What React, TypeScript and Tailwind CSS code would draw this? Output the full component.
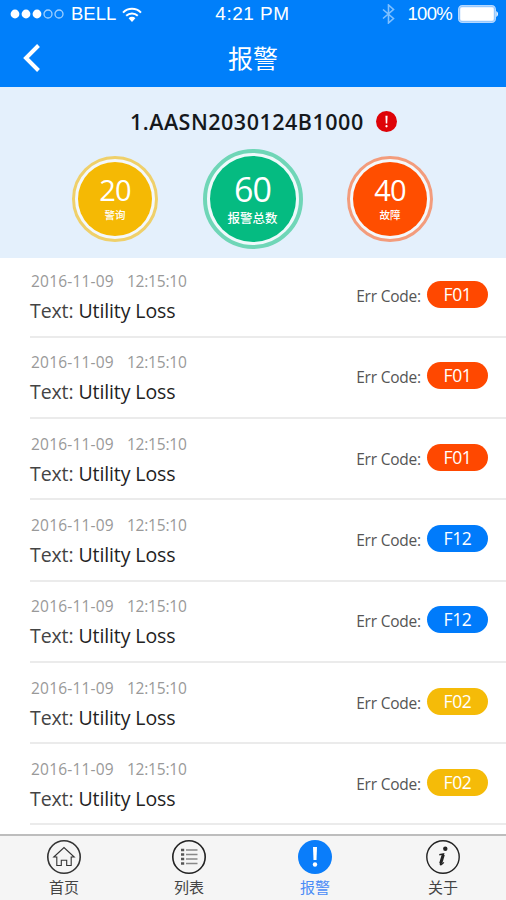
import React from 'react';

interface IAlarm {
  id: number;
  date: string;
  time: string;
  text: string;
  code: string;
  rowClass: string;
}

interface IStat {
  label: string;
  value: number;
  ringClass: string;
  fillClass: string;
  large?: boolean;
}

const stats: IStat[] = [
  { label: '警询', value: 20, ringClass: 'border-[#efd06a]', fillClass: 'bg-[#f5b904]' },
  { label: '报警总数', value: 60, ringClass: 'border-[#6fd6b7]', fillClass: 'bg-[#05bb81]', large: true },
  { label: '故障', value: 40, ringClass: 'border-[#f39c7c]', fillClass: 'bg-[#ff4e00]' },
];

const alarms: IAlarm[] = [
  { id: 1, date: '2016-11-09', time: '12:15:10', text: 'Utility Loss', code: 'F01', rowClass: 'h-[80px] pt-[13px]' },
  { id: 2, date: '2016-11-09', time: '12:15:10', text: 'Utility Loss', code: 'F01', rowClass: 'h-[81px] pt-[14px]' },
  { id: 3, date: '2016-11-09', time: '12:15:10', text: 'Utility Loss', code: 'F01', rowClass: 'h-[81px] pt-[15px]' },
  { id: 4, date: '2016-11-09', time: '12:15:10', text: 'Utility Loss', code: 'F12', rowClass: 'h-[82px] pt-[15px]' },
  { id: 5, date: '2016-11-09', time: '12:15:10', text: 'Utility Loss', code: 'F12', rowClass: 'h-[81px] pt-[14px]' },
  { id: 6, date: '2016-11-09', time: '12:15:10', text: 'Utility Loss', code: 'F02', rowClass: 'h-[81px] pt-[15px]' },
  { id: 7, date: '2016-11-09', time: '12:15:10', text: 'Utility Loss', code: 'F02', rowClass: 'h-[81px] pt-[15px]' },
];

// Helper to pick the badge colour of an error code
const getCodeColorClass = (code: string): string => {
  switch (code) {
    case 'F01': return 'bg-[#ff4800]';
    case 'F12': return 'bg-[#007bfb]';
    default: return 'bg-[#f5bb08]';
  }
};

const StatusBar: React.FC = () => (
  <div className="grid h-7 grid-cols-3 items-center pl-[10px] pr-[8px] font-['Liberation_Sans',sans-serif] text-[18.5px] leading-7 text-white">
    <div className="flex items-center">
      <svg className="h-[10px] w-[55px]" viewBox="0 0 55 10" fill="none">
        <circle cx="5" cy="5" r="4.4" fill="white" />
        <circle cx="16" cy="5" r="4.4" fill="white" />
        <circle cx="27" cy="5" r="4.4" fill="white" />
        <circle cx="38" cy="5" r="4" stroke="#9fd0ff" strokeWidth="1.3" />
        <circle cx="49" cy="5" r="4" stroke="#9fd0ff" strokeWidth="1.3" />
      </svg>
      <span className="ml-[6px]">BELL</span>
      <svg className="ml-[6px] h-[15px] w-[20px]" viewBox="0 0 20 15" fill="none" stroke="white" strokeWidth="2">
        <path d="M1 5.6a12.7 12.7 0 0 1 18 0" />
        <path d="M4.2 8.8a8.2 8.2 0 0 1 11.6 0" />
        <path d="M10 15l-3.4-3.8a4.8 4.8 0 0 1 6.8 0z" fill="white" stroke="none" />
      </svg>
    </div>
    <span className="pr-[3px] text-center text-[19px] tracking-[0.5px]">4:21 PM</span>
    <div className="flex items-center justify-end">
      <svg className="mr-[12px] h-[20px] w-[13px]" viewBox="0 0 13 20" fill="none" stroke="#7fc0ff" strokeWidth="1.6">
        <path d="M1 5.5l10.5 9L6.5 19V1l5 4.5L1 14.5" />
      </svg>
      <span className="tracking-[-0.7px]">100%</span>
      <svg className="ml-[6px] h-[18px] w-[40px]" viewBox="0 0 40 18" fill="none">
        <rect x="0.75" y="0.75" width="36.5" height="16.5" rx="3.5" stroke="#b5d8ff" strokeWidth="1.5" />
        <rect x="1.5" y="1.5" width="35" height="15" rx="3" fill="#d3e7ff" />
        <rect x="2.5" y="2.5" width="33" height="13" rx="2" fill="white" />
        <path d="M38.3 6a3.5 3.5 0 0 1 0 6z" fill="white" />
      </svg>
    </div>
  </div>
);

const StatCircle: React.FC<{ stat: IStat }> = ({ stat }) => {
  if (stat.large) {
    return (
      <div className={`h-[100px] w-[100px] rounded-full border-4 bg-[#eef9fb] p-[3px] ${stat.ringClass}`}>
        <div className={`flex h-full w-full flex-col items-center rounded-full pt-[14px] text-white ${stat.fillClass}`}>
          <span className="text-[34px] leading-[38px] tracking-[-1px]">{stat.value}</span>
          <span className="mt-[3px] font-['Liberation_Sans','Noto_Sans_CJK_SC',sans-serif] text-[12.5px] font-medium leading-[16px]">{stat.label}</span>
        </div>
      </div>
    );
  }

  return (
    <div className={`h-[86px] w-[86px] rounded-full border-3 bg-[#f4f8fb] p-[3px] ${stat.ringClass}`}>
      <div className={`flex h-full w-full flex-col items-center rounded-full pt-[12px] text-white ${stat.fillClass}`}>
        <span className="text-[29px] leading-[32px] tracking-[-0.8px]">{stat.value}</span>
        <span className="mt-[2px] font-['Liberation_Sans','Noto_Sans_CJK_SC',sans-serif] text-[10.5px] font-medium leading-[14px]">{stat.label}</span>
      </div>
    </div>
  );
};

const AlarmRow: React.FC<{ alarm: IAlarm }> = ({ alarm }) => (
  <li className={`flex justify-between border-b-2 border-[#ebebeb] pr-[18px] ${alarm.rowClass}`}>
    <div>
      <div className="flex gap-[13px] pl-px pt-px text-[15.5px] leading-[19px] text-[#999]">
        <span className="tracking-[0.2px]">{alarm.date}</span>
        <span className="tracking-[-0.2px]">{alarm.time}</span>
      </div>
      <p className="mt-[7px] text-[19.5px] leading-[26px] tracking-[-0.1px] text-[#444]">
        Text: <span className="text-[#222]">{alarm.text}</span>
      </p>
    </div>
    <div className="mt-[10px] flex h-[27px] items-center">
      <span className="mt-[2px] text-[15.5px] leading-[20px] tracking-[-0.2px] text-[#555]">Err Code:</span>
      <span className={`ml-[6px] flex h-[27px] w-[61px] items-center justify-center rounded-full text-[17.5px] leading-[27px] tracking-[-0.3px] text-white ${getCodeColorClass(alarm.code)}`}>
        {alarm.code}
      </span>
    </div>
  </li>
);

const TabBar: React.FC = () => (
  <nav className="flex h-[66px] border-t-2 border-[#bdbdbd] bg-[#f5f5f5] pl-[42px] text-[15px] leading-[20px] text-[#444]">
    <div className="flex w-11 flex-col items-center pt-[3px]">
      <svg className="h-[36px] w-[36px]" viewBox="0 0 36 36" fill="none" stroke="#333">
        <circle cx="18" cy="18" r="16.2" strokeWidth="1.6" />
        <path d="M7.8 18L18 8.5 28.2 18h-3v8.5h-4.5v-5.2h-5.4v5.2h-4.5V18z" strokeWidth="1.1" />
      </svg>
      <span className="mt-[2px]">首页</span>
    </div>
    <div className="ml-[81px] flex w-11 flex-col items-center pt-[3px]">
      <svg className="h-[36px] w-[36px]" viewBox="0 0 36 36" fill="none" stroke="#222">
        <circle cx="18" cy="18" r="16.2" strokeWidth="1.6" />
        <path d="M15 11h11.5M15 15.5h11.5M15 20h11.5M15 24.5h11.5" stroke="#888" strokeWidth="1.4" />
        <path d="M10 11h3.2M10 15.5h3.2M10 20h3.2M10 24.5h3.2" stroke="#555" strokeWidth="2.4" />
      </svg>
      <span className="mt-[2px]">列表</span>
    </div>
    <div className="ml-[82px] flex w-11 flex-col items-center pt-[3px] text-[#4a8cf7]">
      <svg className="h-[36px] w-[36px]" viewBox="0 0 36 36" fill="white">
        <circle cx="18" cy="18" r="17" fill="#0a7dfa" />
        <path d="M16 8h4l-.5 13h-3z" />
        <circle cx="18" cy="25.5" r="2.2" />
      </svg>
      <span className="mt-[2px]">报警</span>
    </div>
    <div className="ml-[84px] flex w-11 flex-col items-center pt-[3px]">
      <svg className="h-[36px] w-[36px]" viewBox="0 0 36 36" fill="none" stroke="#222">
        <circle cx="18" cy="18" r="16.2" strokeWidth="1.4" />
        <circle cx="20.3" cy="9.8" r="2.2" fill="#222" stroke="none" />
        <path d="M14.3 15.7l4.2-.8-3 9.5c-.5 1.8.6 2 3.3-1" strokeWidth="1.4" />
        <path d="M18.3 15.5l-2.6 9" strokeWidth="3" />
      </svg>
      <span className="mt-[2px]">关于</span>
    </div>
  </nav>
);

const App: React.FC = () => {
  return (
    <div className="flex h-[900px] w-[506px] flex-col overflow-hidden bg-white font-['Open_Sans','Noto_Sans_CJK_SC',sans-serif]">
      <header className="h-[87px] bg-[#007ffa]">
        <StatusBar />
        <div className="grid h-[59px] grid-cols-3 items-center text-white">
          <svg className="ml-[22px] h-[28px] w-[20px]" viewBox="0 0 20 28" fill="none" stroke="white" strokeWidth="4">
            <path d="M16.5 1.5L4 14l12.5 12.5" />
          </svg>
          <h1 className="text-center text-[25px] leading-[30px]">报警</h1>
        </div>
      </header>

      <section className="h-[171px] bg-[#e4f0fc] pt-[21px]">
        <div className="flex h-[27px] items-center pl-[130px]">
          <h2 className="w-[234px] whitespace-nowrap text-[21.5px] font-semibold leading-[26px] tracking-[0.5px] text-[#15181c]">1.AASN2030124B1000</h2>
          <svg className="ml-[12px] h-[21px] w-[21px]" viewBox="0 0 20 20" fill="white">
            <circle cx="10" cy="10" r="10" fill="#de0308" />
            <path d="M9 4.5h2l-.3 7.5H9.3z" />
            <circle cx="10" cy="14.5" r="1.1" />
          </svg>
        </div>
        <div className="mt-[14px] flex items-center justify-between pl-[72px] pr-[73px]">
          {stats.map((stat) => (
            <StatCircle key={stat.label} stat={stat} />
          ))}
        </div>
      </section>

      <ul className="flex-1 pl-[30px]">
        {alarms.map((alarm) => (
          <AlarmRow key={alarm.id} alarm={alarm} />
        ))}
      </ul>

      <TabBar />
    </div>
  );
};

export default App;
